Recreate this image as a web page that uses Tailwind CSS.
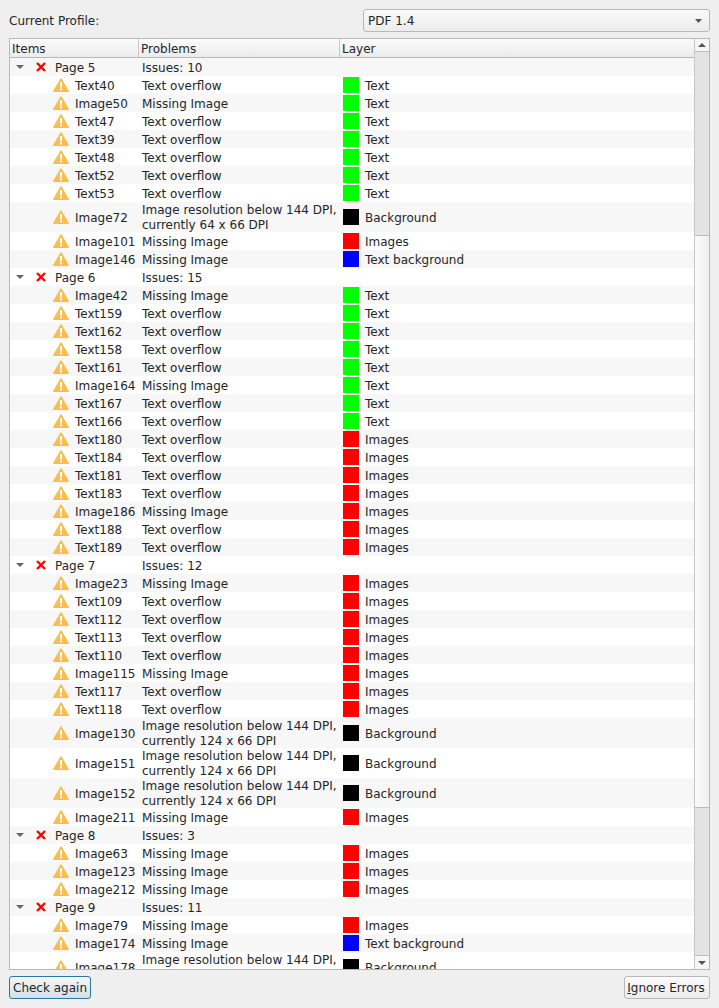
<!doctype html>
<html>
<head>
<meta charset="utf-8">
<script src="https://cdn.jsdelivr.net/npm/@tailwindcss/browser@4"></script>
</head>
<body class="w-[719px] h-[1008px] overflow-hidden bg-[#efefef] font-['DejaVu_Sans',sans-serif] text-[12px] text-[#232629]">
<div class="flex flex-col h-full pt-[9px] pb-[9px] pl-[9px] pr-[9px] gap-[6px]">
  <div class="flex items-center h-[23px]">
    <div class="w-[354px]">Current Profile:</div>
    <div class="flex-1 h-[23px] rounded-[3px] border border-[#b8b8b8] bg-gradient-to-b from-[#fafafa] to-[#ececec] flex items-center pl-[4px] pr-[7px] justify-between">
      <span>PDF 1.4</span>
      <svg width="7" height="4" viewBox="0 0 7 4"><path d="M0 0H7L3.5 4Z" fill="#555"/></svg>
    </div>
  </div>
  <div class="flex-1 min-h-0 border border-[#b8b8b8] bg-white flex overflow-hidden">
    <div class="flex-1 min-w-0 flex flex-col">
      <div class="flex h-[19px] shrink-0 border-b border-[#b8b8b8] bg-gradient-to-b from-[#fbfbfb] to-[#ececec] leading-[20px]">
        <div class="w-[129px] pl-[2px] border-r border-[#c8c8c8]">Items</div>
        <div class="w-[201px] pl-[2px] border-r border-[#c8c8c8]">Problems</div>
        <div class="flex-1 pl-[2px]">Layer</div>
      </div>
      <div id="rows" class="flex-1 min-h-0 overflow-hidden"></div>
    </div>
    <div class="w-[15px] shrink-0 border-l border-[#c8c8c8] flex flex-col bg-[#e3e3e3]">
      <div class="h-[13px] shrink-0 bg-[#f6f6f6] border-b border-[#bdbdbd] flex items-center justify-center"><svg width="8" height="4" viewBox="0 0 8 4"><path d="M0 4H8L4 0Z" fill="#555"/></svg></div>
      <div class="h-[183px] shrink-0"></div>
      <div class="h-[573px] shrink-0 bg-gradient-to-r from-[#fafafa] to-[#f0f0f0] border-y border-[#bdbdbd]"></div>
      <div class="flex-1"></div>
      <div class="h-[14px] shrink-0 bg-[#f6f6f6] border-t border-[#bdbdbd] flex items-center justify-center"><svg width="8" height="4" viewBox="0 0 8 4"><path d="M0 0H8L4 4Z" fill="#555"/></svg></div>
    </div>
  </div>
  <div class="flex justify-between h-[23px]">
    <button class="w-[82px] h-[23px] rounded-[3px] border border-[#2a77a8] bg-gradient-to-b from-[#f4f7f9] to-[#d3dfe7] text-center">Check again</button>
    <button class="w-[86px] h-[23px] rounded-[3px] border border-[#b8b8b8] bg-gradient-to-b from-[#fafafa] to-[#ececec] text-center pr-[2px]"><span class="underline">I</span>gnore Errors</button>
  </div>
</div>
<script>
const warn = '<svg class="absolute left-[43px] top-1/2 -translate-y-1/2" width="16" height="14" viewBox="0 0 16 14"><path d="M8 0.7 L15.4 13.3 H0.6 Z" fill="#fdbc4b" stroke="#fdbc4b" stroke-width="1.2" stroke-linejoin="round"/><rect x="7" y="4" width="2" height="5.4" fill="#fff"/><rect x="7" y="10.4" width="2" height="2" fill="#fff"/></svg>';
const colors = { T: ['bg-[#00ff00]', 'Text'], I: ['bg-[#ff0000]', 'Images'], B: ['bg-[#000000]', 'Background'], K: ['bg-[#0000ff]', 'Text background'] };
const LOW64 = 'Image resolution below 144 DPI,<br>currently 64 x 66 DPI';
const LOW124 = 'Image resolution below 144 DPI,<br>currently 124 x 66 DPI';
const O = 'Text overflow', M = 'Missing Image';
const data = [
 ['Page 5','Issues: 10'],
 ['Text40',O,'T'],['Image50',M,'T'],['Text47',O,'T'],['Text39',O,'T'],['Text48',O,'T'],['Text52',O,'T'],['Text53',O,'T'],['Image72',LOW64,'B'],['Image101',M,'I'],['Image146',M,'K'],
 ['Page 6','Issues: 15'],
 ['Image42',M,'T'],['Text159',O,'T'],['Text162',O,'T'],['Text158',O,'T'],['Text161',O,'T'],['Image164',M,'T'],['Text167',O,'T'],['Text166',O,'T'],['Text180',O,'I'],['Text184',O,'I'],['Text181',O,'I'],['Text183',O,'I'],['Image186',M,'I'],['Text188',O,'I'],['Text189',O,'I'],
 ['Page 7','Issues: 12'],
 ['Image23',M,'I'],['Text109',O,'I'],['Text112',O,'I'],['Text113',O,'I'],['Text110',O,'I'],['Image115',M,'I'],['Text117',O,'I'],['Text118',O,'I'],['Image130',LOW124,'B'],['Image151',LOW124,'B'],['Image152',LOW124,'B'],['Image211',M,'I'],
 ['Page 8','Issues: 3'],
 ['Image63',M,'I'],['Image123',M,'I'],['Image212',M,'I'],
 ['Page 9','Issues: 11'],
 ['Image79',M,'I'],['Image174',M,'K'],['Image178',LOW124,'B']
];
let html = '';
data.forEach((r, i) => {
  const bg = i % 2 === 0 ? 'bg-[#f7f7f7]' : 'bg-white';
  if (r.length === 2) {
    html += `<div class="flex h-[18px] items-center ${bg}">
      <div class="relative w-[130px] shrink-0 h-full flex items-center pl-[45px]">
        <svg class="absolute left-[6px] top-[7px]" width="8" height="4" viewBox="0 0 8 4"><path d="M0 0H8L4 4Z" fill="#666"/></svg>
        <svg class="absolute left-[26px] top-[4px]" width="10" height="10" viewBox="0 0 10 10"><path d="M1 1L9 9M9 1L1 9" stroke="#f00" stroke-width="2.4"/></svg>
        <span class="pt-[2px]">${r[0]}</span></div>
      <div class="w-[202px] shrink-0 pl-[2px] pt-[2px]">${r[1]}</div></div>`;
  } else {
    const tall = r[1].includes('<br>');
    const c = colors[r[2]];
    html += `<div class="flex ${tall ? 'h-[30px]' : 'h-[18px]'} items-center ${bg}">
      <div class="relative w-[130px] shrink-0 h-full flex items-center pl-[65px]">${warn}<span class="pt-[2px]">${r[0]}</span></div>
      <div class="w-[201px] shrink-0 pl-[2px] pt-[2px] leading-[15px]">${r[1]}</div>
      <div class="flex items-center pl-[2px]"><span class="w-[16px] h-[16px] ${c[0]} mr-[6px]"></span><span class="pt-[2px]">${c[1]}</span></div></div>`;
  }
});
document.getElementById('rows').innerHTML = html;
</script>
</body>
</html>
